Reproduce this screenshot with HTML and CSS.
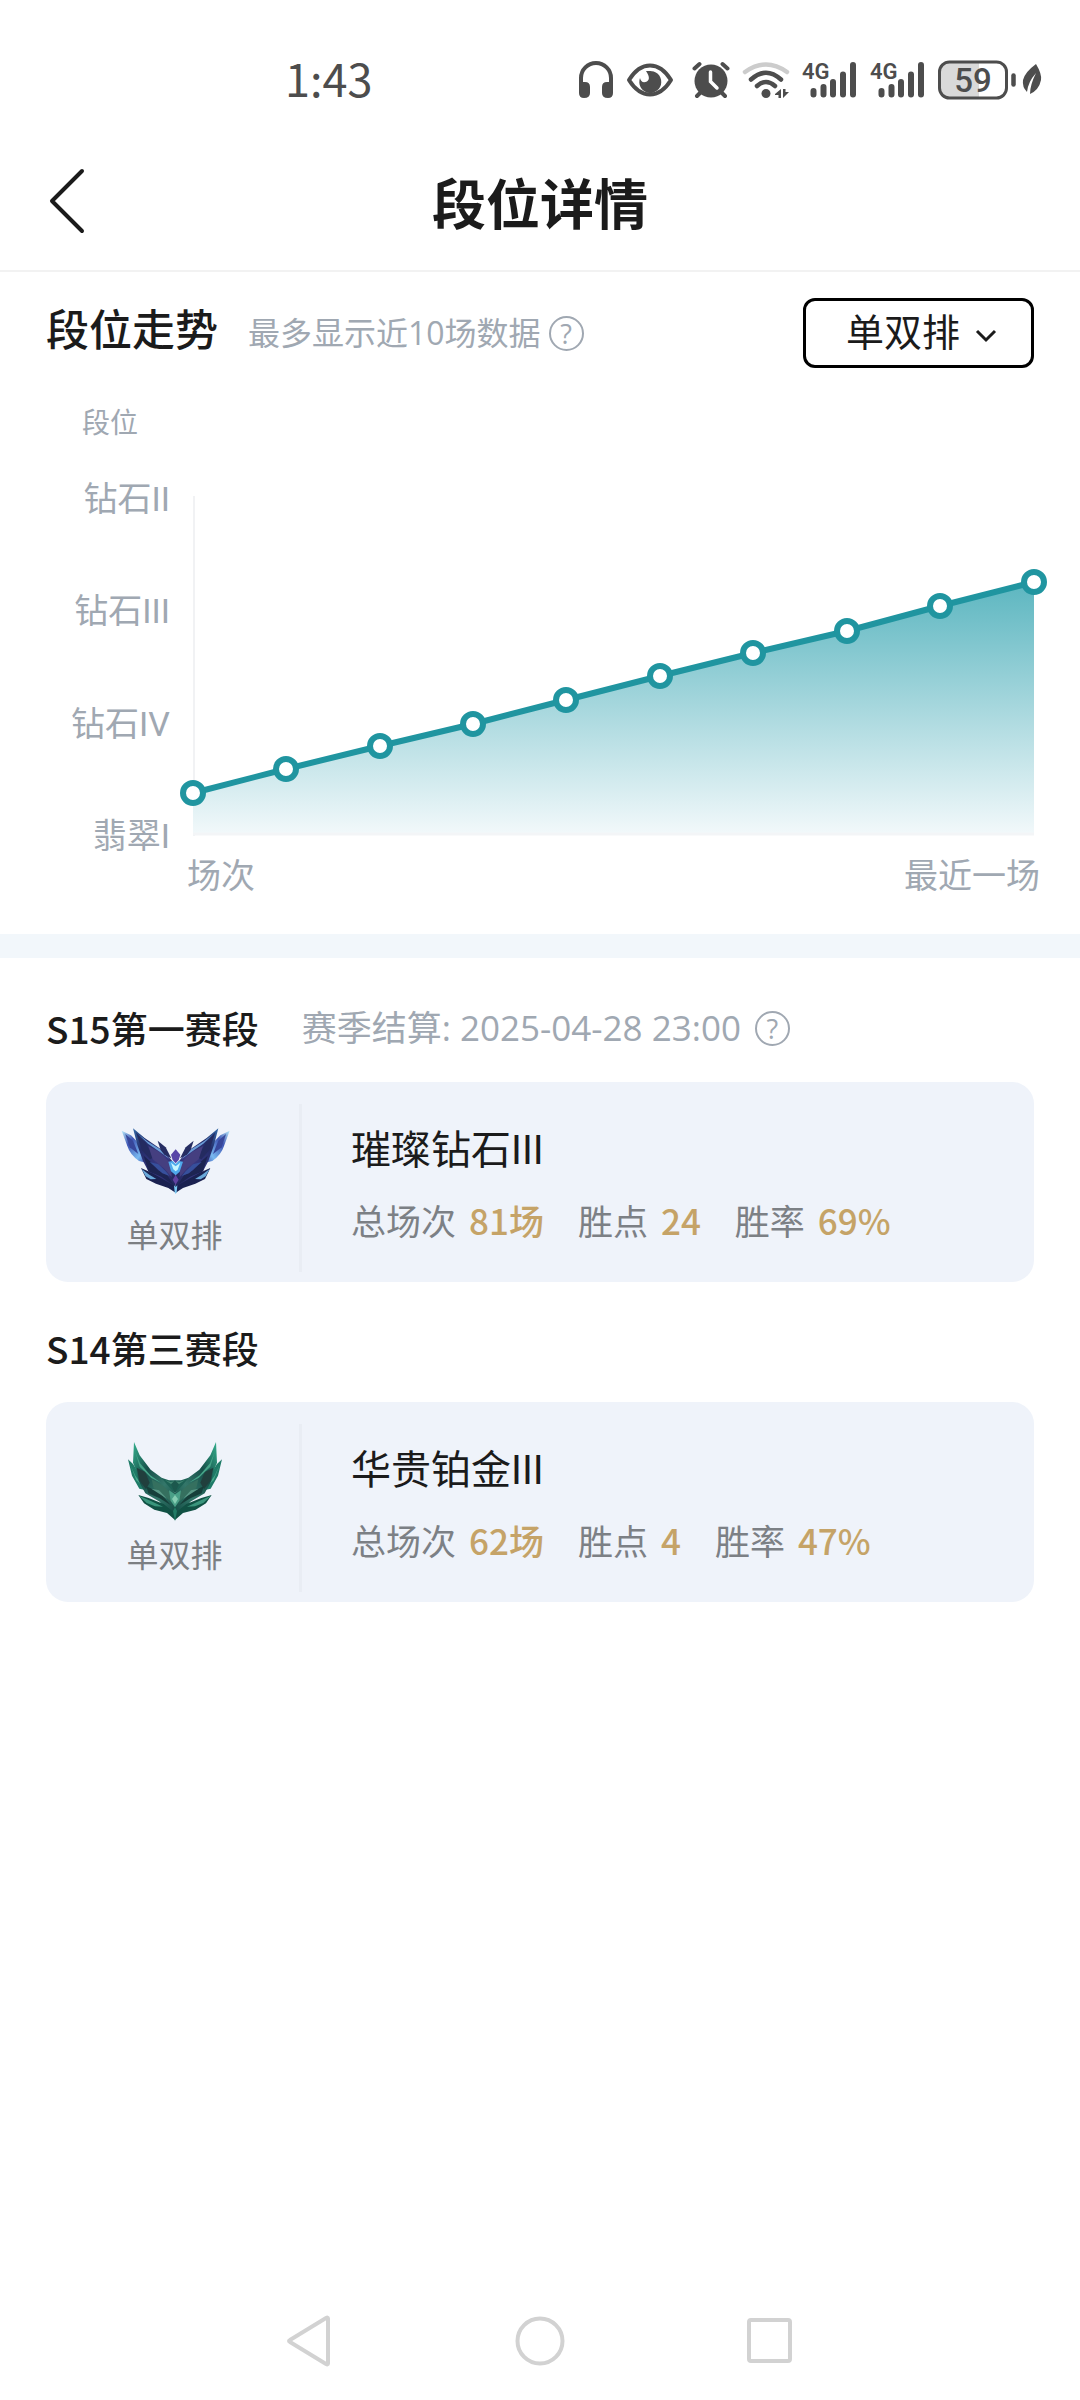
FILE: index.html
```html
<!DOCTYPE html>
<html lang="zh-CN">
<head>
<meta charset="utf-8">
<meta name="viewport" content="width=device-width, initial-scale=1">
<title>段位详情</title>
<link rel="stylesheet" href="styles.css">
</head>
<body>
<div class="page">
  <div class="status">
    <span class="clock">1:43</span>
    <div class="status-icons">
      <svg width="36" height="40" viewBox="0 0 36 40"><path d="M3 28V18a15 15 0 0 1 30 0v10" fill="none" stroke="#4d4d4d" stroke-width="4"/><path d="M1 22H7Q12 22 12 27V33Q12 38 6 38Q1 38 1 33ZM35 22H29Q24 22 24 27V33Q24 38 30 38Q35 38 35 33Z" fill="#4d4d4d"/></svg>
      <svg width="54" height="40" viewBox="0 0 54 40"><path d="M3 20Q12 5.500 24 5.500T45 20Q36 34.500 24 34.500T3 20Z" fill="none" stroke="#4d4d4d" stroke-width="4" stroke-linejoin="round"/><path d="M23 11A11 11 0 1 1 14 18Q15 23 19.500 22Q26 20 20 11Z" fill="#4d4d4d"/></svg>
      <svg width="38" height="40" viewBox="0 0 38 40"><g stroke="#4d4d4d" stroke-width="4" stroke-linecap="round"><path d="M2.500 8.500L7.500 4M30.500 4L35.500 8.500M9 32L5 36M29 32L33 36"/></g><circle cx="19" cy="21" r="16.500" fill="#4d4d4d"/><path d="M18.500 12V21.500L25 28" fill="none" stroke="#fff" stroke-width="3.500" stroke-linecap="round"/></svg>
      <svg width="48" height="40" viewBox="0 0 48 40"><g fill="none" stroke-width="4.500" stroke-linecap="round"><path d="M3 12Q24-3 45 12" stroke="#ccc"/><path d="M9 19.500Q24 6 39 19.500" stroke="#4d4d4d"/><path d="M15 26Q24 18 33 26" stroke="#4d4d4d"/></g><circle cx="24" cy="33.500" r="4.500" fill="#4d4d4d"/><path d="M33 34L39 29V38H36.500V35H33ZM41 29H43.500V32H47L41 38Z" fill="#4d4d4d"/></svg>
      <svg width="56" height="40" viewBox="0 0 56 40"><text x="0" y="19" class="net">4G</text><path d="M11.500 31V34.500M21.500 27V34.500M31 22V34.500M41 14.500V34.500M51 5V34.500" stroke="#4d4d4d" stroke-width="6" stroke-linecap="round"/></svg>
      <svg width="56" height="40" viewBox="0 0 56 40"><text x="0" y="19" class="net">4G</text><path d="M11.500 31V34.500M21.500 27V34.500M31 22V34.500M41 14.500V34.500M51 5V34.500" stroke="#4d4d4d" stroke-width="6" stroke-linecap="round"/></svg>
      <svg width="78" height="40" viewBox="0 0 78 40"><path d="M41 2H13Q2 2 2 12V28Q2 38 13 38H41Z" fill="#d9d9d9"/><rect x="1.500" y="2" width="67" height="36" rx="10" fill="none" stroke="#4d4d4d" stroke-width="3"/><path d="M75.500 15.500V24.500" stroke="#4d4d4d" stroke-width="4.500" stroke-linecap="round"/><text x="35" y="32" class="charge">59</text></svg>
      <svg class="leaf" width="20" height="40" viewBox="0 0 20 40"><path d="M14 4Q20 14 19 20Q17 30 8 34Q8 25 14 13Q6 22 5 32Q0 27 1 20Q3 12 14 4Z" fill="#4d4d4d"/></svg>
    </div>
  </div>

  <header class="topbar">
    <button class="back" type="button" aria-label="返回"><svg width="38" height="68" viewBox="0 0 38 68"><path d="M34 4L4 34L34 64" fill="none" stroke="#1b1b1b" stroke-width="4" stroke-linecap="round" stroke-linejoin="round"/></svg></button>
    <h1>段位详情</h1>
  </header>

  <main>
    <section class="trend">
      <div class="trend-head">
        <h2>段位走势</h2>
        <span class="hint">最多显示近10场数据</span>
        <button class="help" type="button" aria-label="说明">?</button>
        <div class="picker">
          <select aria-label="排位类型"><option>单双排</option></select>
          <svg class="picker-arrow" width="22" height="16" viewBox="0 0 22 16"><path d="M2 3L11 12L20 3" fill="none" stroke="#1b1b1b" stroke-width="3"/></svg>
        </div>
      </div>
      <p class="axis-title">段位</p>
      <div class="chart">
        <div class="y-labels"><span>钻石II</span><span>钻石III</span><span>钻石IV</span><span>翡翠I</span></div>
        <svg class="plot" viewBox="0 0 841 340">
          <defs><linearGradient id="area" x1="0" y1="86" x2="0" y2="340" gradientUnits="userSpaceOnUse"><stop offset="0" stop-color="#5cb6c0"/><stop offset="1" stop-color="#f3f9fb"/></linearGradient></defs>
          <path d="M1 0V340" stroke="#f1f2f4" stroke-width="2"/>
          <path d="M0 297L93 273L187 250L280 228L373 204L467 180L560 157L654 135L747 110L841 86V339H0Z" fill="url(#area)"/>
          <path d="M0 338H841" stroke="#f3f5f7" stroke-width="3"/>
          <path d="M0 297L93 273L187 250L280 228L373 204L467 180L560 157L654 135L747 110L841 86" fill="none" stroke="#2095a0" stroke-width="6"/>
          <g fill="#fff" stroke="#2095a0" stroke-width="6"><circle cx="0" cy="297" r="10"/><circle cx="93" cy="273" r="10"/><circle cx="187" cy="250" r="10"/><circle cx="280" cy="228" r="10"/><circle cx="373" cy="204" r="10"/><circle cx="467" cy="180" r="10"/><circle cx="560" cy="157" r="10"/><circle cx="654" cy="135" r="10"/><circle cx="747" cy="110" r="10"/><circle cx="841" cy="86" r="10"/></g>
        </svg>
        <div class="x-labels"><span>场次</span><span>最近一场</span></div>
      </div>
    </section>

    <section class="seasons">
      <article class="season">
        <div class="season-head">
          <h3>S15第一赛段</h3>
          <span class="settle">赛季结算: 2025-04-28 23:00</span>
          <button class="help" type="button" aria-label="说明">?</button>
        </div>
        <div class="card">
          <div class="rank">
            <svg width="120" height="84" viewBox="12 27 360 252">
              <defs>
                <linearGradient id="ice" x1="0" y1="0" x2="1" y2="1"><stop offset="0" stop-color="#b9ecfb"/><stop offset=".35" stop-color="#3f56b4"/><stop offset=".75" stop-color="#79b9f0"/><stop offset="1" stop-color="#3f4fae"/></linearGradient>
                <linearGradient id="navy" x1="0" y1="0" x2="1" y2="1"><stop offset="0" stop-color="#356ba8"/><stop offset=".25" stop-color="#242c68"/><stop offset=".6" stop-color="#3a3a85"/><stop offset="1" stop-color="#1b2252"/></linearGradient>
                <g id="diamond-wing">
                  <path d="M32 62L60 76L76 92L100 130L106 158L84 153Q57 134 49 108Z" fill="url(#ice)"/>
                  <path d="M43 72L66 92L82 132L56 112Z" fill="#37469a"/>
                  <path d="M66 55L101 84L149 117L172 139L194 166V248L174 230L140 204L112 184L96 153L79 105Z" fill="url(#navy)"/>
                  <path d="M75 67L101 96L129 142L117 148L93 121Z" fill="#242b60"/>
                  <path d="M112 108L146 127L180 161L182 202L158 174L125 148Z" fill="#453f80"/>
                  <path d="M84 74L109 94L151 120L176 147L146 125L111 101Z" fill="#6a9cd6"/>
                  <path d="M98 137L117 154L142 181L169 196L188 225L151 200L112 184Z" fill="#1d2452"/>
                  <path d="M116 156L142 163L164 184L176 198L154 190Z" fill="#37509c"/>
                  <path d="M90 174L122 188L150 204L194 230V248L172 234L135 221L106 207Z" fill="#1a2150"/>
                  <path d="M92 177L115 194L136 207L119 208L104 199Z" fill="#6aa9da"/>
                  <path d="M140 92L164 112L181 145L160 134L149 120Z" fill="#262d62"/>
                </g>
              </defs>
              <use href="#diamond-wing"/><use href="#diamond-wing" transform="translate(388 0) scale(-1 1)"/>
              <path d="M194 118L208 134L203 150L194 160L185 150L180 134Z" fill="#5845a8"/>
              <path d="M172 155L185 153L194 162L203 153L216 155L206 185L194 196L180 184Z" fill="#4fa9ec"/>
              <path d="M180 158L194 169L208 158L200 179L194 184L187 178Z" fill="#c8f6ff"/>
              <path d="M194 195L203 209L194 224L185 209Z" fill="#6042a0"/>
              <path d="M189 226L194 231L199 226L197 247L194 252L191 247Z" fill="#79c8f2"/>
            </svg>
            <span>单双排</span>
          </div>
          <div class="detail">
            <p class="name">璀璨钻石III</p>
            <dl class="stats"><div><dt>总场次</dt><dd>81场</dd></div><div><dt>胜点</dt><dd>24</dd></div><div><dt>胜率</dt><dd>69%</dd></div></dl>
          </div>
        </div>
      </article>

      <article class="season">
        <div class="season-head"><h3>S14第三赛段</h3></div>
        <div class="card">
          <div class="rank">
            <svg width="120" height="84" viewBox="12 27 360 252">
              <defs>
                <linearGradient id="jade" x1="0" y1="0" x2="1" y2="1"><stop offset="0" stop-color="#35b08e"/><stop offset=".35" stop-color="#164f49"/><stop offset=".65" stop-color="#34776a"/><stop offset="1" stop-color="#0f4740"/></linearGradient>
                <g id="plat-wing">
                  <path d="M51 88L66 102L85 132L120 184L85 176L63 137Z" fill="#1f7b67"/>
                  <path d="M58 104L73 137L96 169L76 151Z" fill="#48a98b"/>
                  <path d="M69 36L86 76L119 119L158 148L179 169L192 190V268L174 250L146 215L103 190L83 153L75 120L66 98Z" fill="url(#jade)"/>
                  <path d="M73 66L87 100L118 136L150 158L121 144L86 110Z" fill="#46a488"/>
                  <path d="M77 113L102 126L116 158L105 178L85 151Z" fill="#213f3d"/>
                  <path d="M122 148L157 167L179 190L183 218L154 192L128 174Z" fill="#35705f"/>
                  <path d="M106 169L145 187L180 226L146 205L112 190Z" fill="#163f3a"/>
                  <path d="M121 176L144 181L168 206Z" fill="#5a9987"/>
                  <path d="M82 195L113 204L158 222L192 250V270L168 249L130 239L99 220Z" fill="#115144"/>
                  <path d="M84 197L118 212L156 230L132 229L107 219Z" fill="#3a957c"/>
                  <path d="M151 143L174 151L192 151V189L174 170Z" fill="#1d6255"/>
                  <path d="M162 150L178 156L192 154V170Z" fill="#438873"/>
                </g>
              </defs>
              <use href="#plat-wing"/><use href="#plat-wing" transform="translate(384 0) scale(-1 1)"/>
              <path d="M192 151L204 163L192 190L180 163Z" fill="#1c584d"/>
              <path d="M174 181L192 193L210 181L205 212L192 232L179 212Z" fill="#4aa088"/>
              <path d="M192 195L201 207L192 222L183 207Z" fill="#86cdb3"/>
              <path d="M192 232L198 243L192 274L186 243Z" fill="#227b65"/>
            </svg>
            <span>单双排</span>
          </div>
          <div class="detail">
            <p class="name">华贵铂金III</p>
            <dl class="stats"><div><dt>总场次</dt><dd>62场</dd></div><div><dt>胜点</dt><dd>4</dd></div><div><dt>胜率</dt><dd>47%</dd></div></dl>
          </div>
        </div>
      </article>
    </section>
  </main>

  <nav class="sysnav">
    <button type="button" aria-label="返回"><svg width="56" height="56" viewBox="0 0 56 56"><path d="M45 5.500V50.500Q45 52 43 51L7 29Q5 28 7 27L43 5Q45 4 45 5.500Z"/></svg></button>
    <button type="button" aria-label="主页"><svg width="56" height="56" viewBox="0 0 56 56"><circle cx="28" cy="28" r="22.500"/></svg></button>
    <button type="button" aria-label="最近任务"><svg width="56" height="56" viewBox="0 0 56 56"><rect x="8" y="7" width="41" height="41" rx="2"/></svg></button>
  </nav>
</div>
</body>
</html>
```
FILE: styles.css
```css
* { box-sizing: border-box; }
body, h1, h2, h3, p, dl, dd { margin: 0; }
body {
  background: #fff;
  color: #1b1b1b;
  font-family: "Open Sans", "Noto Sans CJK SC", sans-serif;
}
button { padding: 0; border: 0; background: none; font: inherit; color: inherit; }
svg { display: block; }

.page { display: flex; flex-direction: column; min-height: 100vh; }

/* system status bar */
.status {
  display: flex;
  justify-content: space-between;
  align-items: center;
  height: 130px;
  padding: 50px 38px 20px 285px;
}
.clock { padding-bottom: 4px; font: 400 45px/60px "Noto Sans CJK SC", sans-serif; color: #4d4d4d; }
.status-icons { display: flex; align-items: center; gap: 12px; }
.leaf { margin-left: -6px; }
.net { font: 600 22px Roboto, sans-serif; fill: #4d4d4d; }
.charge { font: 500 33px Roboto, sans-serif; fill: #4d4d4d; text-anchor: middle; }

/* title bar */
.topbar {
  display: grid;
  grid-template-columns: 80px 1fr 80px;
  align-items: center;
  height: 142px;
  padding: 0 46px;
  border-bottom: 2px solid #f2f2f2;
}
.back { justify-self: start; padding: 2px 0 0 2px; }
.topbar h1 { padding-top: 8px; font-size: 54px; line-height: 72px; font-weight: 700; text-align: center; }

/* trend chart */
.trend { padding: 26px 46px 38px; border-bottom: 24px solid #f2f7fb; }
.trend-head { display: flex; align-items: center; height: 70px; }
.trend-head h2 { padding-bottom: 6px; font-size: 43px; line-height: 60px; font-weight: 500; }
.hint { margin: 0 8px 0 30px; font-size: 32px; line-height: 40px; color: #a0a8b2; }
.help {
  width: 35px;
  height: 35px;
  border: 2px solid #a0a8b2;
  border-radius: 50%;
  font-size: 27px;
  line-height: 31px;
  color: #a0a8b2;
}
.picker { position: relative; margin-left: auto; }
.picker select {
  display: block;
  width: 231px;
  height: 70px;
  padding: 0 40px 4px;
  border: 3px solid #000;
  border-radius: 12px;
  appearance: none;
  background: #fff;
  color: #1b1b1b;
  font: inherit;
  font-size: 38px;
}
.picker-arrow { position: absolute; top: 30px; right: 37px; pointer-events: none; }
.axis-title { margin-top: 34px; padding-left: 36px; font-size: 28px; line-height: 40px; color: #a0a8b2; }
.chart {
  display: grid;
  grid-template-columns: 124px 1fr;
  column-gap: 23px;
  margin-top: 34px;
  color: #a0a8b2;
  font-family: Roboto, "Noto Sans CJK SC", sans-serif;
  font-size: 34px;
  line-height: 40px;
}
.y-labels {
  display: flex;
  flex-direction: column;
  justify-content: space-between;
  margin: 3px 0 -3px;
  text-align: right;
  white-space: nowrap;
}
.plot { width: 100%; margin: 20px 0 17px; overflow: visible; }
.x-labels { grid-column: 2; display: flex; justify-content: space-between; margin: 3px -6px 0; }

/* seasons */
.seasons { display: grid; gap: 41px; padding: 45px 46px; }
.season-head { display: flex; align-items: center; height: 50px; margin-bottom: 29px; }
.season-head h3 { font: 500 37px/50px "Noto Sans CJK SC", sans-serif; }
.settle { margin: 0 14px 0 43px; font-size: 35px; line-height: 50px; color: #a0a8b2; }
.card { display: flex; min-height: 200px; border-radius: 22px; background: #eff3fa; }
.rank {
  display: flex;
  flex-direction: column;
  align-items: center;
  gap: 12px;
  width: 256px;
  margin: 22px 0 10px;
  padding: 15px 0 0 4px;
  border-right: 3px solid #e9edf4;
  font-size: 32px;
  line-height: 40px;
  color: #7c7f83;
}
.detail { padding: 44px 0 0 49px; }
.name { font-family: Roboto, "Noto Sans CJK SC", sans-serif; font-size: 40px; line-height: 50px; }
.stats { display: flex; gap: 34px; margin-top: 24px; font-family: "Noto Sans CJK SC", sans-serif; font-size: 35px; line-height: 40px; }
.stats div { display: flex; gap: 13px; }
.stats dt { color: #7c8085; }
.stats dd { color: #c5a367; font-weight: 500; }

/* system navigation */
.sysnav { display: flex; justify-content: center; gap: 173px; margin-top: auto; padding-bottom: 31px; }
.sysnav svg { fill: none; stroke: #d2d2d2; stroke-width: 4; }
```
